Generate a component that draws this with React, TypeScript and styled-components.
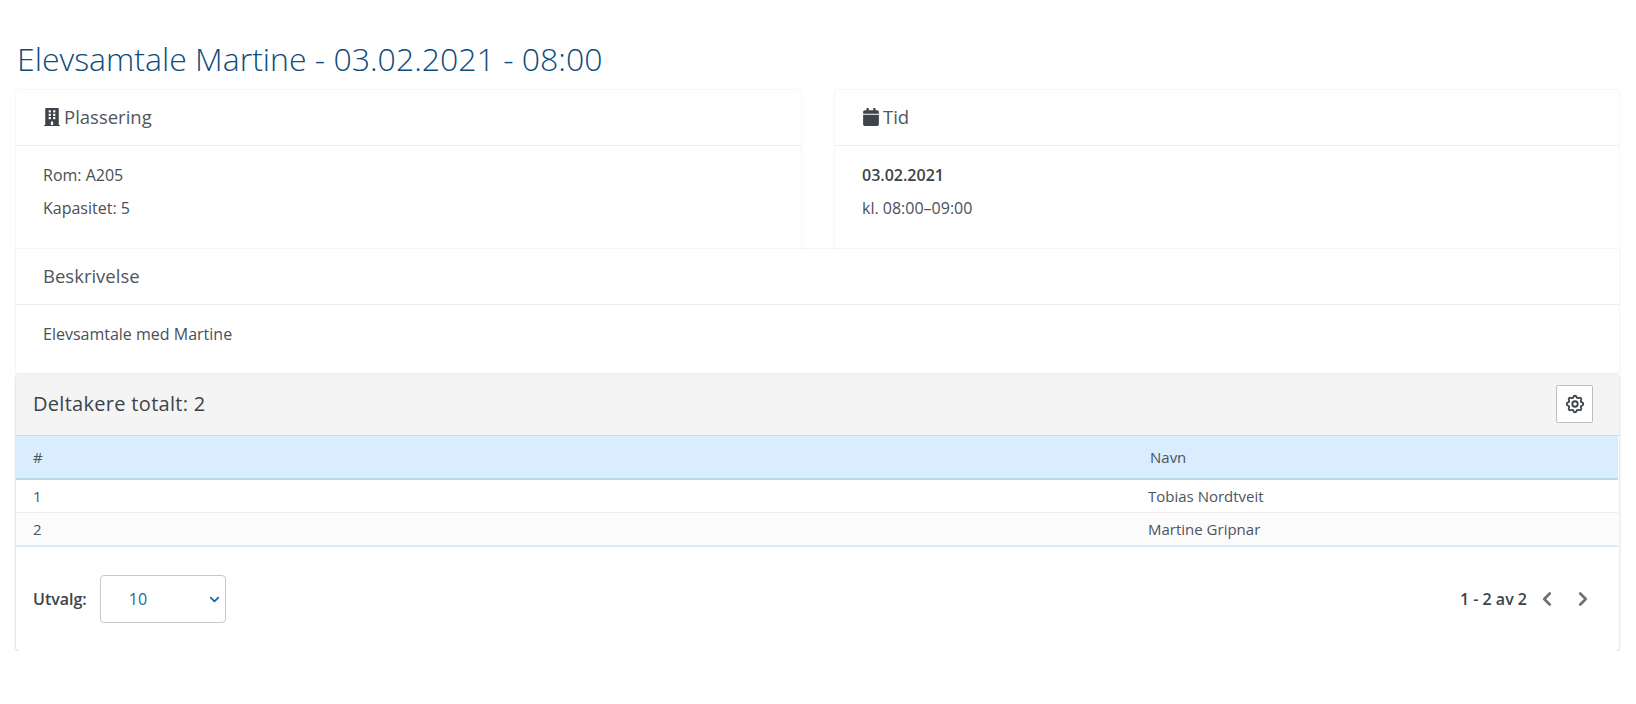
import styled, { createGlobalStyle } from "styled-components";
import { FaBuilding, FaCalendar } from "react-icons/fa";
import { HiOutlineCog } from "react-icons/hi";
import { ChevronDown, ChevronLeft, ChevronRight } from "lucide-react";

const GlobalStyle = createGlobalStyle`
  html, body {
    margin: 0;
    background: #fff;
    font-family: "Open Sans", "Liberation Sans", sans-serif;
    font-size: 16px;
    color: #4a5057;
  }
  * { box-sizing: border-box; }
`;

const Page = styled.div`
  padding: 37px 17px 0 16px;
`;

const Title = styled.h1`
  margin: 0 0 9px 1px;
  font-size: 32px;
  line-height: 44px;
  font-weight: 300;
  color: #0e4c7c;
`;

const Columns = styled.div`
  display: grid;
  grid-template-columns: 785px 784px;
  justify-content: space-between;
`;

const Card = styled.section`
  background: #fff;
  border-radius: 3px 3px 0 0;
  box-shadow: 0 0 2px rgba(0, 0, 0, 0.12);
`;

const CardHeader = styled.header`
  height: 56px;
  padding: 0 27px 2px;
  display: flex;
  align-items: center;
  gap: 3px;
  border-bottom: 1px solid #ececec;
  font-size: 18.5px;
  font-weight: 400;
  color: #4f565d;
  svg { color: #3d444c; font-size: 18px; }
`;

const CardBody = styled.div<{ $height: number }>`
  height: ${(p) => p.$height}px;
  padding: 20px 27px 0;
`;

const Line = styled.p<{ $bold?: boolean }>`
  margin: 0 0 13.5px;
  line-height: 19px;
  font-size: 16px;
  font-weight: ${(p) => (p.$bold ? 600 : 400)};
  color: ${(p) => (p.$bold ? "#3c4349" : "inherit")};
`;

const DescriptionCard = styled(Card)`
  position: relative;
  border-radius: 0;
`;

const TableCard = styled.section`
  background: #fff;
  border-radius: 3px 3px 4px 4px;
  overflow: hidden;
  box-shadow: 0 1px 3px rgba(0, 0, 0, 0.25);
  margin-top: 1px;
`;

const TableTitle = styled.div`
  height: 62px;
  padding: 0 26px 2px 17px;
  display: flex;
  align-items: center;
  justify-content: space-between;
  background: #f4f4f4;
  border-bottom: 1px solid #d4d8db;
  font-size: 20px;
  letter-spacing: 0.3px;
  color: #3c4349;
`;

const IconButton = styled.button`
  width: 37px;
  height: 38px;
  padding: 0;
  display: grid;
  place-items: center;
  background: #fff;
  border: 1px solid #b9bfc4;
  border-radius: 2px;
  color: #3c4349;
  font-size: 22px;
`;

const Table = styled.table`
  width: calc(100% - 1px);
  table-layout: fixed;
  border-collapse: collapse;
`;

const HeadCell = styled.th<{ $shift?: number }>`
  height: 43px;
  padding: 0 0 0 ${(p) => p.$shift ?? 17}px;
  background: #d9edfe;
  border-bottom: 2px solid #b8d8ee;
  text-align: left;
  font-weight: 400;
  font-size: 15px;
  color: #4d545b;
`;

const Row = styled.tr<{ $stripe?: boolean }>`
  background: ${(p) => (p.$stripe ? "#fbfbfb" : "#fff")};
  border-bottom: ${(p) => (p.$stripe ? "2px solid #d9ecfa" : "1px solid #ececec")};
  td {
    height: ${(p) => (p.$stripe ? 34 : 33)}px;
    padding-top: ${(p) => (p.$stripe ? 0 : 1)}px;
  }
`;

const Cell = styled.td`
  padding: 0 0 0 17px;
  font-size: 15px;
  color: #4d545b;
`;

const Footer = styled.div`
  height: 104px;
  padding: 0 27px 1px 17px;
  display: flex;
  align-items: center;
  justify-content: space-between;
`;

const PageSize = styled.label`
  display: flex;
  align-items: center;
  gap: 13px;
  font-weight: 600;
  font-size: 16px;
  color: #3c4349;
`;

const SelectWrap = styled.span`
  position: relative;
  display: block;
  width: 126px;
  height: 48px;
  svg {
    position: absolute;
    right: 4px;
    top: 17px;
    color: #1a6a9a;
    pointer-events: none;
  }
`;

const Select = styled.select`
  width: 100%;
  height: 100%;
  padding: 0 0 0 28px;
  appearance: none;
  background: #fff;
  border: 1px solid #c8c8c8;
  border-radius: 4px;
  font: 400 16px "Open Sans", sans-serif;
  color: #1a6a9a;
`;

const Pager = styled.div`
  display: flex;
  align-items: center;
  font-weight: 600;
  font-size: 16px;
  color: #3c4349;
`;

const PagerButton = styled.span`
  display: grid;
  place-items: center;
  width: 20px;
  margin-left: 16px;
  color: #6f7478;
  &:first-of-type { margin-left: 9px; }
`;

export default function App() {
  return (
    <>
      <GlobalStyle />
      <Page>
        <Title>Elevsamtale Martine - 03.02.2021 - 08:00</Title>
        <Columns>
          <Card>
            <CardHeader>
              <FaBuilding />
              Plassering
            </CardHeader>
            <CardBody $height={103}>
              <Line>Rom: A205</Line>
              <Line>Kapasitet: 5</Line>
            </CardBody>
          </Card>
          <Card>
            <CardHeader>
              <FaCalendar />
              Tid
            </CardHeader>
            <CardBody $height={103}>
              <Line $bold>03.02.2021</Line>
              <Line>kl. 08:00–09:00</Line>
            </CardBody>
          </Card>
        </Columns>
        <DescriptionCard>
          <CardHeader>Beskrivelse</CardHeader>
          <CardBody $height={68}>
            <Line>Elevsamtale med Martine</Line>
          </CardBody>
        </DescriptionCard>
        <TableCard>
          <TableTitle>
            Deltakere totalt: 2
            <IconButton aria-label="Innstillinger">
              <HiOutlineCog />
            </IconButton>
          </TableTitle>
          <Table>
            <colgroup>
              <col style={{ width: 1115 }} />
              <col />
            </colgroup>
            <thead>
              <tr>
                <HeadCell>#</HeadCell>
                <HeadCell $shift={19}>Navn</HeadCell>
              </tr>
            </thead>
            <tbody>
              <Row>
                <Cell>1</Cell>
                <Cell>Tobias Nordtveit</Cell>
              </Row>
              <Row $stripe>
                <Cell>2</Cell>
                <Cell>Martine Gripnar</Cell>
              </Row>
            </tbody>
          </Table>
          <Footer>
            <PageSize>
              Utvalg:
              <SelectWrap>
                <Select defaultValue="10">
                  <option>10</option>
                  <option>25</option>
                  <option>50</option>
                </Select>
                <ChevronDown size={15} strokeWidth={3} />
              </SelectWrap>
            </PageSize>
            <Pager>
              1 - 2 av 2
              <PagerButton>
                <ChevronLeft size={22} strokeWidth={3} />
              </PagerButton>
              <PagerButton>
                <ChevronRight size={22} strokeWidth={3} />
              </PagerButton>
            </Pager>
          </Footer>
        </TableCard>
      </Page>
    </>
  );
}
